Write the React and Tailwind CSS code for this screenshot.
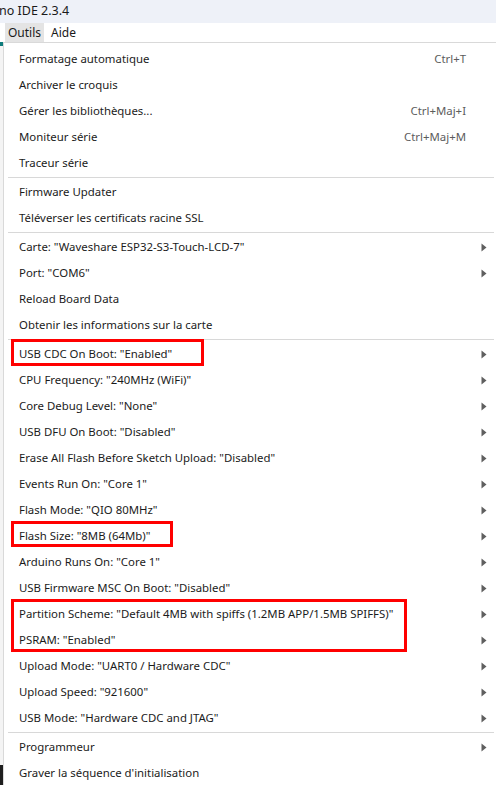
import React from 'react';

const groups = [
  [
    { label: 'Formatage automatique', key: 'Ctrl+T' },
    { label: 'Archiver le croquis' },
    { label: 'Gérer les bibliothèques...', key: 'Ctrl+Maj+I' },
    { label: 'Moniteur série', key: 'Ctrl+Maj+M' },
    { label: 'Traceur série' },
  ],
  [
    { label: 'Firmware Updater' },
    { label: 'Téléverser les certificats racine SSL' },
  ],
  [
    { label: 'Carte: "Waveshare ESP32-S3-Touch-LCD-7"', sub: true },
    { label: 'Port: "COM6"', sub: true },
    { label: 'Reload Board Data' },
    { label: 'Obtenir les informations sur la carte' },
  ],
  [
    { label: 'USB CDC On Boot: "Enabled"', sub: true },
    { label: 'CPU Frequency: "240MHz (WiFi)"', sub: true },
    { label: 'Core Debug Level: "None"', sub: true },
    { label: 'USB DFU On Boot: "Disabled"', sub: true },
    { label: 'Erase All Flash Before Sketch Upload: "Disabled"', sub: true },
    { label: 'Events Run On: "Core 1"', sub: true },
    { label: 'Flash Mode: "QIO 80MHz"', sub: true },
    { label: 'Flash Size: "8MB (64Mb)"', sub: true },
    { label: 'Arduino Runs On: "Core 1"', sub: true },
    { label: 'USB Firmware MSC On Boot: "Disabled"', sub: true },
    { label: 'Partition Scheme: "Default 4MB with spiffs (1.2MB APP/1.5MB SPIFFS)"', sub: true },
    { label: 'PSRAM: "Enabled"', sub: true },
    { label: 'Upload Mode: "UART0 / Hardware CDC"', sub: true },
    { label: 'Upload Speed: "921600"', sub: true },
    { label: 'USB Mode: "Hardware CDC and JTAG"', sub: true },
  ],
  [
    { label: 'Programmeur', sub: true },
    { label: "Graver la séquence d'initialisation" },
  ],
];

function Arrow() {
  return (
    <svg width="6" height="9" viewBox="0 0 6 9" className="shrink-0">
      <path d="M0.5 0.5 L5.5 4.5 L0.5 8.5 Z" fill="#5f5f5f" />
    </svg>
  );
}

function Row({ item }) {
  return (
    <div className="h-[26px] flex items-center pl-[15px] pr-[9px] text-[#1b1b1b]">
      <span className="flex-1 whitespace-nowrap">{item.label}</span>
      {item.key && <span className="text-[#5c5c5c] mr-[21px]">{item.key}</span>}
      {item.sub && <Arrow />}
    </div>
  );
}

export default function App() {
  return (
    <div
      className="relative w-[496px] h-[785px] overflow-hidden bg-white text-[11.4px]"
      style={{ fontFamily: '"Noto Sans", "Open Sans", sans-serif' }}
    >
      {/* title bar */}
      <div className="h-[23px] bg-[#eef1f8] flex items-center text-[#1a1a1a] text-[12.5px] -ml-[1px]">
        no IDE 2.3.4
      </div>

      {/* menu bar */}
      <div className="h-[19px] flex items-stretch bg-white text-[#1a1a1a] text-[12px]">
        <div className="ml-[5px] w-[39px] bg-[#e4e4e4] flex items-center pl-[3px] pt-px">Outils</div>
        <div className="flex items-center pl-[7px] pt-px">Aide</div>
      </div>

      <div className="flex h-[743px]">
        {/* background window strip */}
        <div className="w-[3px] bg-[#f4f4f4] flex flex-col">
          <div className="h-[4px] bg-[#0f7c7c]" />
          <div className="flex-1" />
          <div className="h-[20px] bg-[#1e1e1e]" />
        </div>

        {/* dropdown */}
        <div className="flex-1 border-l border-t border-[#d9d9d9] bg-white pt-[3px]">
          {groups.map((g, i) => (
            <div key={i}>
              {i > 0 && (
                <div className="h-[3px] flex items-center pl-[4px] pr-[2px]">
                  <div className="h-px w-full bg-[#d8d8d8]" />
                </div>
              )}
              {g.map((item) => (
                <Row key={item.label} item={item} />
              ))}
            </div>
          ))}
        </div>
      </div>

      {/* highlight boxes */}
      <div className="absolute left-[11px] top-[339px] w-[193px] h-[27px] border-[3px] border-[#ff0000]" />
      <div className="absolute left-[11px] top-[521px] w-[162px] h-[26px] border-[3px] border-[#ff0000]" />
      <div className="absolute left-[11px] top-[599px] w-[396px] h-[53px] border-[3px] border-[#ff0000]" />
    </div>
  );
}
